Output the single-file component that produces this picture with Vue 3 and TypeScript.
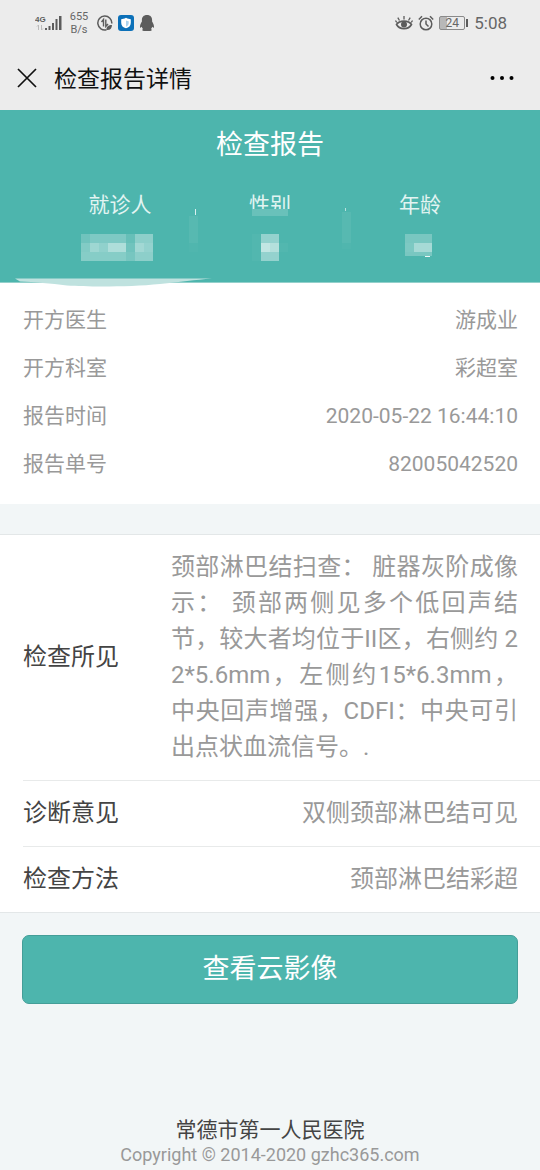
<script setup lang="ts">
interface Block {
  x: number
  y: number
  w: number
  h: number
  o: number
}
interface Field {
  label: string
  value: string
}
interface Person {
  label: string
  mask: Block[]
}

const people: Person[] = [
  {
    label: '就诊人',
    mask: [
      { x: 36, y: 44, w: 9, h: 9, o: 0.2 },
      { x: 45, y: 44, w: 36, h: 9, o: 0.28 },
      { x: 81, y: 44, w: 9, h: 9, o: 0.14 },
      { x: 90, y: 44, w: 18, h: 9, o: 0.36 },
      { x: 36, y: 53, w: 9, h: 9, o: 0.3 },
      { x: 45, y: 53, w: 9, h: 9, o: 0.46 },
      { x: 54, y: 53, w: 9, h: 9, o: 0.38 },
      { x: 63, y: 53, w: 18, h: 9, o: 0.55 },
      { x: 81, y: 53, w: 9, h: 9, o: 0.2 },
      { x: 90, y: 53, w: 9, h: 9, o: 0.48 },
      { x: 99, y: 53, w: 9, h: 9, o: 0.4 },
      { x: 36, y: 62, w: 45, h: 9, o: 0.32 },
      { x: 81, y: 62, w: 9, h: 9, o: 0.24 },
      { x: 90, y: 62, w: 18, h: 9, o: 0.36 },
      { x: 144, y: 26, w: 9, h: 27, o: 0.06 },
      { x: 144, y: 53, w: 9, h: 9, o: 0.02 },
      { x: 150, y: 19, w: 1, h: 6, o: 0.8 },
    ],
  },
  {
    label: '性别',
    mask: [
      { x: 57, y: 19, w: 36, h: 7, o: 0.16 },
      { x: 57, y: 44, w: 9, h: 27, o: 0.03 },
      { x: 66, y: 44, w: 18, h: 9, o: 0.4 },
      { x: 66, y: 53, w: 9, h: 9, o: 0.66 },
      { x: 75, y: 53, w: 9, h: 9, o: 0.58 },
      { x: 66, y: 62, w: 18, h: 9, o: 0.4 },
      { x: 84, y: 53, w: 9, h: 9, o: 0.03 },
      { x: 147, y: 22, w: 9, h: 31, o: 0.06 },
      { x: 147, y: 53, w: 9, h: 6, o: 0.02 },
      { x: 150, y: 18, w: 1, h: 3, o: 0.6 },
    ],
  },
  {
    label: '年龄',
    mask: [
      { x: 60, y: 44, w: 27, h: 9, o: 0.25 },
      { x: 60, y: 53, w: 9, h: 9, o: 0.27 },
      { x: 69, y: 53, w: 18, h: 9, o: 0.5 },
      { x: 60, y: 62, w: 27, h: 4, o: 0.25 },
      { x: 80, y: 66, w: 5, h: 1, o: 0.9 },
    ],
  },
]

const summary: Field[] = [
  { label: '开方医生', value: '游成业' },
  { label: '开方科室', value: '彩超室' },
  { label: '报告时间', value: '2020-05-22 16:44:10' },
  { label: '报告单号', value: '82005042520' },
]

const details: Field[] = [
  {
    label: '检查所见',
    value:
      '颈部淋巴结扫查： 脏器灰阶成像示： 颈部两侧见多个低回声结节，较大者均位于II区，右侧约 22*5.6mm，左侧约15*6.3mm，中央回声增强，CDFI：中央可引出点状血流信号。.',
  },
  { label: '诊断意见', value: '双侧颈部淋巴结可见' },
  { label: '检查方法', value: '颈部淋巴结彩超' },
]
</script>

<template>
  <div class="page" lang="zh-CN">
    <div class="status">
      <div class="status-group">
        <svg class="signal" width="28" height="18" viewBox="0 0 28 18" aria-label="4G">
          <text x="0" y="8" class="net">4G</text>
          <path d="M3.500 16v-5M2 12.500l1.500-1.500M6.500 11v5M8 14.500l-1.500 1.500" stroke="#bbb" fill="none" />
          <path d="M10 14h2v2h-2zM13.500 12h2v4h-2zM17 9h2v7h-2zM20.500 5h2v11h-2zM24 2h2.500v14H24z" fill="#5c5c5c" />
        </svg>
        <span class="speed"><span>655</span><span>B/s</span></span>
        <svg width="16" height="16" viewBox="0 0 16 16" fill="none" stroke="#5c5c5c">
          <path d="M14.800 8.500A7 7 0 1 0 9.500 14.800" stroke-width="1.500" />
          <path d="M6.500 11.500V4.500L4.500 7M8.800 4.500v7L11 9" stroke-width="1.400" />
          <path d="M9.500 15c-.5-3.500 2-5 5.500-5 0 3.500-2 5.500-5.500 5z" fill="#5c5c5c" stroke="none" />
        </svg>
        <svg width="16" height="16" viewBox="0 0 16 16">
          <rect width="16" height="16" rx="3" fill="#0b70b8" />
          <path d="M8 2.800c2 1.100 3.300 1.400 4.800 1.400v3.500c0 3-1.900 4.800-4.800 5.600-2.900-.8-4.800-2.600-4.800-5.600V4.200C4.700 4.200 6 3.900 8 2.800z" fill="#fff" />
          <path d="M8 5.500c1 .6 1.700.8 2.700.8v2c0 1.600-1 2.700-2.700 3.400z" fill="#a9d2ef" />
        </svg>
        <svg width="16" height="18" viewBox="0 0 16 18">
          <path d="M8 1C4.500 1 2.900 3.300 2.900 6v1.500C1.600 9.500.8 11.500 1 13.500c.5.500 1.300-.1 1.800-.7.200.9.600 1.600 1.200 2.200-1.200.6-1 2 1 2h6c2 0 2.200-1.400 1-2 .6-.6 1-1.300 1.200-2.200.5.600 1.300 1.200 1.800.7.200-2-.6-4-1.900-6V6C13.100 3.300 11.500 1 8 1z" fill="#5c5c5c" />
        </svg>
      </div>
      <div class="status-group">
        <svg width="18" height="16" viewBox="0 0 18 16" fill="none" stroke="#5c5c5c">
          <path d="M1.500 9.500C4.500 5 13.500 5 16.500 9.500 13.500 15 4.500 15 1.500 9.500z" stroke-width="1.600" />
          <circle cx="9" cy="9.500" r="3" fill="#5c5c5c" stroke="none" />
          <path d="M9 4.500V1M4.500 5.500L2.800 2.700M13.500 5.500l1.700-2.800M1.800 7.500L.5 5.500M16.200 7.500l1.300-2" stroke-width="1.300" />
        </svg>
        <svg width="16" height="16" viewBox="0 0 16 16" fill="none" stroke="#5c5c5c" stroke-width="1.500">
          <circle cx="8" cy="9" r="5.800" />
          <path d="M8 5.500V9l2.500 2.500M.8 4.500L4 1.300M15.200 4.500L12 1.300" />
        </svg>
        <span class="battery"><span class="level">24</span></span>
        <span class="clock">5:08</span>
      </div>
    </div>

    <nav class="bar">
      <button type="button" class="icon-btn" aria-label="关闭">
        <svg width="20" height="20" viewBox="0 0 20 20"><path d="M1 1l18 18M19 1L1 19" stroke="#111" stroke-width="1.700" /></svg>
      </button>
      <h1>检查报告详情</h1>
      <button type="button" class="icon-btn more" aria-label="更多">
        <svg width="24" height="6" viewBox="0 0 24 6"><circle cx="2.500" cy="3" r="2" /><circle cx="12" cy="3" r="2" /><circle cx="21.500" cy="3" r="2" /></svg>
      </button>
    </nav>

    <header class="hero">
      <h2>检查报告</h2>
      <div class="people">
        <div v-for="p in people" :key="p.label" class="person">
          <span>{{ p.label }}</span>
          <svg class="mask" width="150" height="76" viewBox="0 0 150 76" shape-rendering="crispEdges">
            <rect v-if="p.label === '性别'" x="50" y="19" width="50" height="10" fill="#4db5ad" />
            <rect v-for="(b, i) in p.mask" :key="i" :x="b.x" :y="b.y" :width="b.w" :height="b.h" fill="#fff" :fill-opacity="b.o" />
          </svg>
        </div>
      </div>
      <svg class="smear" width="200" height="10" viewBox="0 0 200 10">
        <path d="M0 0.500H197C180 2 165 4 145 6 115 9 75 9 52 7.500 35 5.500 20 4 5 3.500z" fill="#bfe2df" />
      </svg>
    </header>

    <dl class="summary">
      <div v-for="f in summary" :key="f.label">
        <dt>{{ f.label }}</dt>
        <dd>{{ f.value }}</dd>
      </div>
    </dl>

    <dl class="details">
      <div v-for="f in details" :key="f.label">
        <dt>{{ f.label }}</dt>
        <dd><p>{{ f.value }}</p></dd>
      </div>
    </dl>

    <div class="action"><button type="button">查看云影像</button></div>

    <footer>
      <p class="hospital">常德市第一人民医院</p>
      <p class="copy">Copyright © 2014-2020 gzhc365.com</p>
    </footer>
  </div>
</template>

<style>
body {
  margin: 0;
  background: #f2f6f7;
}
</style>

<style scoped>
.page {
  display: flex;
  flex-direction: column;
  min-height: 100vh;
  font-family: Roboto, "Noto Sans CJK SC", sans-serif;
  font-weight: 400;
  background: #f2f6f7;
  color: #999;
}
h1, h2, p, dl, dd {
  margin: 0;
}
button {
  font-family: inherit;
  font-weight: inherit;
  cursor: pointer;
}
svg {
  display: block;
  flex: none;
}
.status {
  display: flex;
  justify-content: space-between;
  align-items: center;
  height: 46px;
  padding: 0 33px 0 35px;
  background: #ececec;
  color: #666;
}
.status-group {
  display: flex;
  align-items: center;
  gap: 5px;
}
.net {
  font: 700 8px "Liberation Sans", sans-serif;
  fill: #5c5c5c;
}
.speed {
  display: flex;
  flex-direction: column;
  align-items: center;
  width: 22px;
  margin-right: 2px;
  font-size: 11px;
  line-height: 13px;
}
.battery {
  position: relative;
  display: flex;
  width: 24px;
  height: 12px;
  margin-right: 4px;
  border: 1px solid #8a8a8a;
  border-radius: 2px;
  background: linear-gradient(90deg, #b8b8b8 28%, transparent 28%);
}
.battery::after {
  content: "";
  position: absolute;
  right: -4px;
  top: 2px;
  width: 2px;
  height: 8px;
  background: #5c5c5c;
}
.level {
  flex: 1;
  text-align: center;
  font-size: 12px;
  line-height: 12px;
}
.clock {
  font-size: 17px;
}
.bar {
  display: flex;
  align-items: center;
  gap: 17px;
  height: 64px;
  padding: 0 26px 0 17px;
  background: #ececec;
}
.icon-btn {
  padding: 0;
  border: 0;
  background: none;
}
.more {
  margin-left: auto;
}
h1 {
  padding-top: 4px;
  font-size: 23px;
  font-weight: 400;
  line-height: 32px;
  color: #111;
}
.hero {
  position: relative;
  padding: 14px 45px 20px;
  border-bottom: 1px solid #93d0cb;
  background: #4db5ad;
  color: #fff;
  text-align: center;
}
h2 {
  font-size: 27px;
  font-weight: 400;
  line-height: 42px;
}
.people {
  display: grid;
  grid-template-columns: repeat(3, 1fr);
  margin-top: 24px;
}
.person {
  display: flex;
  justify-content: center;
  position: relative;
  height: 72px;
  font-size: 21px;
  line-height: 30px;
  color: #e2f4f2;
}
.mask {
  position: absolute;
  top: 0;
  left: calc(50% - 75px);
  overflow: visible;
}
.smear {
  position: absolute;
  left: 15px;
  bottom: -6px;
}
.summary {
  padding: 13px 22px 16px 23px;
  background: #fff;
  font-size: 21px;
  line-height: 48px;
}
.summary div {
  display: flex;
  justify-content: space-between;
}
.details {
  margin-top: 30px;
  padding-left: 23px;
  border-top: 1px solid #e3e7e8;
  border-bottom: 1px solid #e3e7e8;
  background: #fff;
  font-size: 24px;
  line-height: 36px;
}
.details div {
  display: flex;
  align-items: center;
  justify-content: space-between;
  gap: 52px;
  padding: 14px 22px 15px 0;
}
.details div + div {
  border-top: 1px solid #e8eaea;
}
.details dt {
  flex: none;
  color: #444;
}
.details dd p {
  text-align: justify;
  word-break: break-all;
}
.action {
  padding: 22px 22px 0;
}
.action button {
  width: 100%;
  height: 69px;
  padding: 0 0 6px;
  border: 1px solid #449e98;
  border-radius: 7px;
  background: #4db5ad;
  color: #fff;
  font-size: 27px;
}
footer {
  margin-top: auto;
  padding-bottom: 3px;
  text-align: center;
}
.hospital {
  font-size: 21px;
  line-height: 26px;
  color: #444;
}
.copy {
  font-size: 18px;
  line-height: 24px;
}
</style>
